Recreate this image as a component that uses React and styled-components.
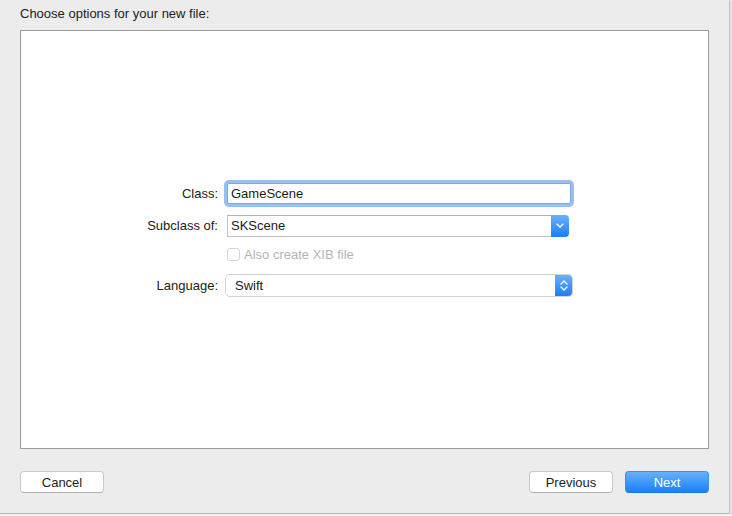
import React from 'react';
import styled, { createGlobalStyle } from 'styled-components';

const GlobalStyle = createGlobalStyle`
html, body {
    margin: 0;
    padding: 0;
    background: #f2f2f2;
}
body {
    font-family: "Liberation Sans", Arial, sans-serif;
    font-size: 13px;
    color: #1d1d1d;
}
`

const Sheet = styled.div`
width: 730px;
height: 514px;
background: #ececec;
border-right: 1px solid #c4c4c4;
border-bottom: 1px solid #b8b8b8;
box-shadow: 1px 1px 2px rgba(0, 0, 0, 0.12);
display: flex;
flex-direction: column;
padding: 0 20px 0 20px;
box-sizing: border-box;
`

const Heading = styled.div`
padding-top: 6px;
height: 16px;
line-height: 16px;
margin-bottom: 8px;
color: #222;
`

const Panel = styled.div`
flex: 1;
background: #fff;
border: 1px solid #9b9b9b;
display: flex;
flex-direction: column;
justify-content: center;
padding-bottom: 2px;
`

const Row = styled.div`
display: flex;
align-items: center;
gap: 8px;
height: ${p => p.h}px;
margin-top: ${p => p.top || 0}px;
`

const Label = styled.div`
width: 197px;
flex-shrink: 0;
text-align: right;
color: #222;
`

const TextField = styled.div`
margin-left: 1px;
width: 344px;
height: 21px;
box-sizing: border-box;
border: 1px solid #7aa9e4;
border-radius: 2px;
box-shadow: 0 0 0 3px rgba(118, 169, 236, 0.75);
padding: 0 3px;
line-height: 19px;
color: #1a1a1a;
background: #fff;
`

const Combo = styled.div`
margin-left: 1px;
width: 342px;
height: 22px;
display: flex;
`

const ComboText = styled.div`
flex: 1;
border: 1px solid #c2c2c2;
border-top-color: #b0b0b0;
border-right: none;
box-sizing: border-box;
padding: 0 3px;
line-height: 20px;
color: #1a1a1a;
`

const BlueCap = styled.div`
width: ${p => p.w}px;
height: 100%;
background: linear-gradient(#68b1f8, #1b7ffb);
border-radius: ${p => p.round};
display: flex;
align-items: center;
justify-content: center;
flex-shrink: 0;
`

const CheckBox = styled.div`
margin-left: 1px;
display: flex;
align-items: center;
gap: 4px;
color: #b4b4b4;
`

const Check = styled.div`
width: 13px;
height: 13px;
border: 1px solid #d6d6d6;
border-radius: 3px;
background: #fff;
box-sizing: border-box;
`

const Popup = styled.div`
width: 346px;
height: 21px;
display: flex;
border-radius: 4px;
background: #fff;
box-shadow: 0 0 0 1px #d2d2d2, 0 1px 1px rgba(0, 0, 0, 0.12);
overflow: hidden;
`

const PopupText = styled.div`
flex: 1;
padding-left: 9px;
line-height: 21px;
color: #1a1a1a;
`

const Footer = styled.div`
height: 64px;
display: flex;
align-items: flex-start;
padding-top: 22px;
box-sizing: border-box;
`

const Spacer = styled.div`
flex: 1;
`

const Button = styled.div`
width: 84px;
height: 22px;
box-sizing: border-box;
border-radius: 4px;
display: flex;
align-items: center;
justify-content: center;
margin-left: ${p => p.gap || 0}px;
background: ${p => p.primary ? 'linear-gradient(#67b0f8, #1a80fb)' : '#fff'};
color: ${p => p.primary ? '#fff' : '#1d1d1d'};
border: 1px solid ${p => p.primary ? '#3b8ef0' : '#c8c8c8'};
border-bottom-color: ${p => p.primary ? '#1f74e0' : '#b2b2b2'};
`

const Chevron = () => (
    <svg width="8" height="5" viewBox="0 0 8 5">
        <path d="M1 1 L4 4 L7 1" fill="none" stroke="#fff" strokeWidth="1.3" strokeLinecap="round" strokeLinejoin="round" />
    </svg>
)

const UpDown = () => (
    <svg width="8" height="13" viewBox="0 0 8 13">
        <path d="M1 5 L4 2 L7 5" fill="none" stroke="#fff" strokeWidth="1.3" strokeLinecap="round" strokeLinejoin="round" />
        <path d="M1 8 L4 11 L7 8" fill="none" stroke="#fff" strokeWidth="1.3" strokeLinecap="round" strokeLinejoin="round" />
    </svg>
)

const App = () => {
    return (
        <>
            <GlobalStyle />
            <Sheet>
                <Heading>Choose options for your new file:</Heading>
                <Panel>
                    <Row h={26}>
                        <Label>Class:</Label>
                        <TextField>GameScene</TextField>
                    </Row>
                    <Row h={22} top={8}>
                        <Label>Subclass of:</Label>
                        <Combo>
                            <ComboText>SKScene</ComboText>
                            <BlueCap w={18} round="0 4px 4px 0">
                                <Chevron />
                            </BlueCap>
                        </Combo>
                    </Row>
                    <Row h={16} top={10}>
                        <Label />
                        <CheckBox>
                            <Check />
                            <span>Also create XIB file</span>
                        </CheckBox>
                    </Row>
                    <Row h={22} top={12}>
                        <Label>Language:</Label>
                        <Popup>
                            <PopupText>Swift</PopupText>
                            <BlueCap w={17} round="0">
                                <UpDown />
                            </BlueCap>
                        </Popup>
                    </Row>
                </Panel>
                <Footer>
                    <Button>Cancel</Button>
                    <Spacer />
                    <Button>Previous</Button>
                    <Button primary gap={12}>Next</Button>
                </Footer>
            </Sheet>
        </>
    );
};

export default App;
